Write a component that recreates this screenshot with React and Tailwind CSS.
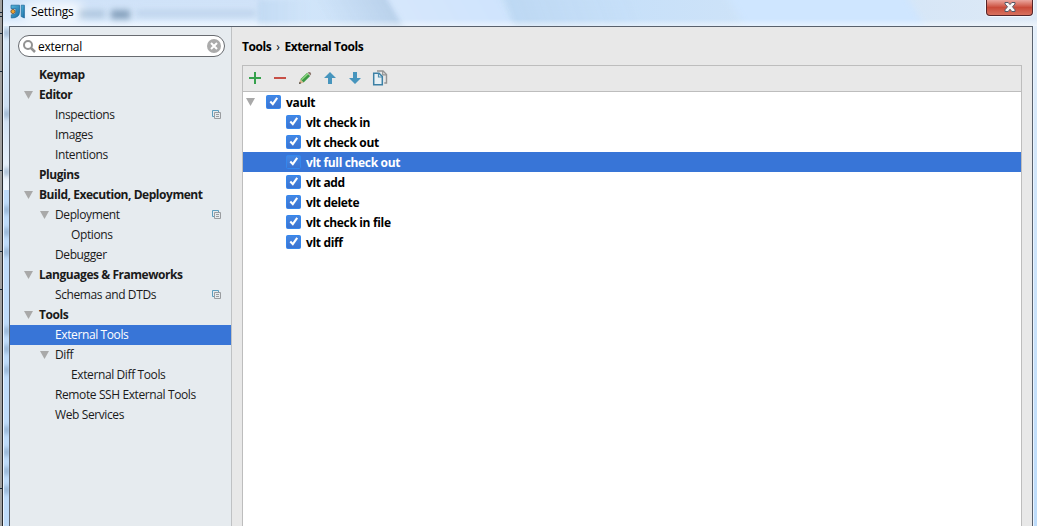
import React from "react";

const NAV = [
  { label: "Keymap", pad: "pl-[29px]", bold: true },
  { label: "Editor", pad: "pl-[14px]", bold: true, open: true },
  { label: "Inspections", pad: "pl-[45px]", project: true },
  { label: "Images", pad: "pl-[45px]" },
  { label: "Intentions", pad: "pl-[45px]" },
  { label: "Plugins", pad: "pl-[29px]", bold: true },
  { label: "Build, Execution, Deployment", pad: "pl-[14px]", bold: true, open: true },
  { label: "Deployment", pad: "pl-[30px]", open: true, project: true },
  { label: "Options", pad: "pl-[61px]" },
  { label: "Debugger", pad: "pl-[45px]" },
  { label: "Languages & Frameworks", pad: "pl-[14px]", bold: true, open: true },
  { label: "Schemas and DTDs", pad: "pl-[45px]", project: true },
  { label: "Tools", pad: "pl-[14px]", bold: true, open: true },
  { label: "External Tools", pad: "pl-[45px]", selected: true },
  { label: "Diff", pad: "pl-[30px]", open: true },
  { label: "External Diff Tools", pad: "pl-[61px]" },
  { label: "Remote SSH External Tools", pad: "pl-[45px]" },
  { label: "Web Services", pad: "pl-[45px]" },
];

const TOOLS = [
  "vlt check in",
  "vlt check out",
  "vlt full check out",
  "vlt add",
  "vlt delete",
  "vlt check in file",
  "vlt diff",
];

// Vertical centres of the blurred shapes seen through the left glass edge
const EDGE_SPOTS = [33, 114, 172, 210, 232, 252, 331, 349, 370, 430, 452, 471, 490];
const GUTTER_TICKS = [12, 16, 33, 71, 170, 251, 289, 488];

function Arrow() {
  return (
    <svg width="9" height="8" viewBox="0 0 9 8" className="shrink-0">
      <path d="M0 0H9L4.5 8Z" fill="#a9a9a9" />
    </svg>
  );
}

function ProjectIcon() {
  return (
    <svg width="10" height="10" viewBox="0 0 10 10" fill="none" className="ml-auto mr-[9px] shrink-0">
      <path d="M2 6.5H.5V.5H6.5V2" stroke="#5c9dbd" />
      <path d="M2.5 2.5H8.5V8.5H2.5ZM4 4.5H7M4 6.5H7" stroke="#9a9da0" />
    </svg>
  );
}

function NavRow({ item }) {
  return (
    <div
      className={`flex h-5 shrink-0 items-center ${item.pad} ${
        item.selected ? "bg-[#3875d7] text-white" : "text-[#1a1a1a]"
      } ${item.bold ? "font-bold tracking-[-0.46px]" : "tracking-[-0.39px]"}`}
    >
      {item.open && (
        <span className="mr-[5px] flex w-[10px]">
          <Arrow />
        </span>
      )}
      <span className="whitespace-nowrap">{item.label}</span>
      {item.project && <ProjectIcon />}
    </div>
  );
}

function Check() {
  return (
    <svg width="15" height="14" viewBox="0 0 15 14" className="shrink-0">
      <defs>
        <linearGradient id="box" x1="0" y1="0" x2="0" y2="1">
          <stop offset="0" stopColor="#4487e4" />
          <stop offset="1" stopColor="#3b73d0" />
        </linearGradient>
      </defs>
      <rect x=".5" y=".5" width="14" height="13" rx="1" fill="url(#box)" stroke="#3487ee" />
      <path d="M4.3 6.6L6.8 9.2L11.2 2.8" fill="none" stroke="#fff" strokeWidth="2.1" />
    </svg>
  );
}

function Logo() {
  return (
    <svg width="16" height="16" viewBox="0 0 16 16">
      <defs>
        <linearGradient id="logo" x1="0" y1="0" x2="1" y2="1">
          <stop offset="0" stopColor="#55b7dc" />
          <stop offset="1" stopColor="#1769a3" />
        </linearGradient>
      </defs>
      <path d="M1 1.2H9.5V8Q9.5 14 1.3 14V10.8Q5.8 10.8 5.8 8V4.5H1Z" fill="url(#logo)" stroke="#17649a" strokeWidth=".7" />
      <path d="M11.2 1.2H14.4V14L11.2 12.5Z" fill="url(#logo)" stroke="#17649a" strokeWidth=".7" />
      <circle cx="3" cy="7.5" r="2.1" fill="#f0a530" stroke="#674b2e" strokeWidth=".8" />
    </svg>
  );
}

function Toolbar() {
  return (
    <div className="flex h-[26px] items-start gap-[9px] border-b border-[#bdbdbd] bg-[#e8e8e8] pl-1 pt-1">
      <svg width="16" height="16" viewBox="0 0 16 16">
        <path d="M2 8H14M8 2V14" stroke="#36a14c" strokeWidth="2" />
      </svg>
      <svg width="16" height="16" viewBox="0 0 16 16">
        <path d="M2 8H14" stroke="#c74f46" strokeWidth="2" />
      </svg>
      <svg width="16" height="16" viewBox="0 0 16 16">
        <path d="M2 14L3.3 9.5L6.5 12.5Z" fill="#d9b58b" />
        <path d="M2 14L2.7 11.7L4.2 13.2Z" fill="#333" />
        <path d="M3.4 9.3L10 3L13.1 6L6.6 12.5Z" fill="#3b9743" />
        <path d="M4.5 9.8L11 3.6" stroke="#8dd781" strokeWidth="1.5" />
        <path d="M10.6 2.6Q12.3 1.3 13.6 2.5Q14.8 3.9 13.5 5.5Z" fill="#8b756b" />
      </svg>
      <svg width="16" height="16" viewBox="0 0 16 16">
        <path d="M8 2L14 8H10V14H6V8H2Z" fill="#4795bd" />
      </svg>
      <svg width="16" height="16" viewBox="0 0 16 16">
        <path d="M8 14L14 8H10V2H6V8H2Z" fill="#4795bd" />
      </svg>
      <svg width="16" height="16" viewBox="0 0 16 16" fill="none">
        <path d="M5 1H11L14.5 4.5V13H12.3" stroke="#949494" strokeWidth="1.4" />
        <path d="M10.7 1V4.8H14.3" stroke="#949494" strokeWidth="1.2" />
        <path d="M1.7 3.2H7L10.3 6.5V14.8H1.7Z" fill="#e8f0f4" stroke="#3c80a5" strokeWidth="1.5" />
        <path d="M6.5 3.5V7H10" stroke="#4d8eaf" strokeWidth="1.2" />
      </svg>
    </div>
  );
}

function TitleBar() {
  return (
    <header className="relative flex h-[26px] shrink-0 items-start overflow-hidden bg-linear-to-r from-[#d9e9fa] via-[#c7e0f9] via-60% to-[#dde9f6]">
      <div className="absolute left-0 top-0 h-full w-[262px] bg-linear-to-b from-[#cfe2f8] to-[#dcecfd]" />
      <div className="absolute left-[255px] top-0 h-full w-[50px] bg-linear-to-r from-[#c2daf3] to-transparent blur-[2px]" />
      <div className="absolute left-[320px] top-[-10px] h-[50px] w-[75px] skew-x-[30deg] bg-linear-to-r from-transparent to-[#b9d1eb] blur-[3px]" />
      <div className="absolute left-[395px] top-[-10px] h-[50px] w-[110px] skew-x-[30deg] bg-linear-to-r from-[#d6e7fc] to-[#cfe4fd] blur-[3px]" />
      <div className="absolute left-[508px] top-[-10px] h-[50px] w-[130px] skew-x-[20deg] bg-linear-to-r from-[#bdd8f3] to-transparent blur-[3px]" />
      <div className="absolute left-[735px] top-[-10px] h-[50px] w-[180px] skew-x-[30deg] bg-[#cfe6ff] blur-[4px]" />
      <div className="absolute inset-x-0 bottom-0 h-[7px] bg-linear-to-b from-transparent to-white/50" />
      <div className="absolute left-[20px] top-[2px] h-5 w-[60px] rounded-full bg-white/80 blur-[6px]" />
      <div className="absolute left-[76px] top-[10px] h-[8px] w-[26px] bg-[#88a6c4]/50 blur-[3px]" />
      <div className="absolute left-[108px] top-[10px] h-[9px] w-[19px] bg-[#6f8dab]/80 blur-[3px]" />
      <div className="absolute left-[133px] top-[10px] h-[7px] w-[120px] bg-[#a5c0dd]/50 blur-[3px]" />
      <div className="relative ml-[7px] mt-[4px]">
        <Logo />
      </div>
      <span className="relative ml-[5px] mt-[3px] leading-[18px] tracking-[-0.25px] text-black">Settings</span>
      <button
        aria-label="Close"
        className="relative ml-auto mr-[4px] flex h-[16px] w-[47px] items-start justify-center rounded-b-[4px] border border-t-0 border-[#54252a] bg-linear-to-b from-[#eaa69f] via-[#c94b3a] via-50% to-[#d8715e] pt-[2px] shadow-[0_0_0_1px_#ffffffaa]"
      >
        <svg width="12" height="10" viewBox="0 0 12 10">
          <path d="M1 .5H4.2L6 2.6L7.8 .5H11V2L8.5 4.8L11 7.8V9.5H7.8L6 7.2L4.2 9.5H1V7.8L3.5 4.8L1 2Z" fill="#f7f7f7" stroke="#555866" />
        </svg>
      </button>
    </header>
  );
}

function Sidebar() {
  return (
    <aside className="flex w-[222px] shrink-0 flex-col border-r border-[#bfc1c3] bg-[#e6ebef]">
      <div className="ml-2 mt-2 flex h-[22px] w-[207px] shrink-0 items-center rounded-full border border-[#686b70] bg-white pl-[4px] pr-[3px]">
        <svg width="13" height="13" viewBox="0 0 13 13" fill="none" stroke="#929292">
          <circle cx="5" cy="5" r="4" strokeWidth="2" />
          <path d="M8 8L12 12" strokeWidth="2.5" />
        </svg>
        <span className="ml-[2px] mt-px tracking-[-0.25px] text-black">external</span>
        <svg width="14" height="14" viewBox="0 0 14 14" className="ml-auto">
          <circle cx="7" cy="7" r="7" fill="#ababab" />
          <path d="M4 4L10 10M10 4L4 10" stroke="#fff" strokeWidth="2" />
        </svg>
      </div>
      <nav className="mt-[8px] flex flex-col">
        {NAV.map((item) => (
          <NavRow key={item.label} item={item} />
        ))}
      </nav>
    </aside>
  );
}

function ToolTree() {
  return (
    <div className="flex flex-1 flex-col bg-white font-bold tracking-[-0.34px] text-black">
      <div className="flex h-5 items-center pl-[3px]">
        <Arrow />
        <span className="ml-[11px] mr-[5px] flex">
          <Check />
        </span>
        <span className="pt-[2px]">vault</span>
      </div>
      {TOOLS.map((name) => (
        <div
          key={name}
          className={`flex h-5 items-center pl-[43px] ${
            name === "vlt full check out" ? "bg-[#3875d7] text-white" : ""
          }`}
        >
          <Check />
          <span className="ml-[5px] pt-[2px]">{name}</span>
        </div>
      ))}
    </div>
  );
}

export default function App() {
  return (
    <div className="flex h-[526px] w-[1037px] overflow-hidden font-['Open_Sans','Noto_Sans',sans-serif] text-[12px] leading-[20px]">
      <div className="relative w-[2px] shrink-0 bg-[#a0a0a0]">
        {GUTTER_TICKS.map((top) => (
          <i key={top} className="absolute left-0 h-px w-full bg-[#16283a]" style={{ top }} />
        ))}
      </div>
      <div className="w-px shrink-0 bg-[#25282c]" />
      <div className="flex min-w-0 flex-1 flex-col bg-[#e3effc]">
        <TitleBar />
        <div className="flex min-h-0 flex-1">
          <div className="w-px shrink-0 bg-[#eaf4ff]" />
          <div className="relative flex w-[5px] shrink-0 flex-col overflow-hidden">
            <div className="h-[164px] bg-linear-to-b from-[#dcecfb] via-[#cddff2] to-[#f0f6fd]" />
            <div className="flex-1 bg-[#bfdcfa]" />
            {EDGE_SPOTS.map((y) => (
              <i
                key={y}
                className="absolute left-0 h-[8px] w-full bg-[#7f9cbd]/70 blur-[2px]"
                style={{ top: y - 30 }}
              />
            ))}
          </div>
          <div className="flex min-w-0 flex-1 border-x border-t border-[#59616d]">
            <Sidebar />
            <main className="flex min-w-0 flex-1 flex-col bg-[#e8e8e8] pl-[10px] pr-[10px]">
              <h1 className="mt-[10px] flex h-5 shrink-0 items-center font-bold tracking-[-0.43px] text-black">
                <span>Tools</span>
                <span className="mx-[5px] font-normal">›</span>
                <span>External Tools</span>
              </h1>
              <section className="mt-[8px] flex flex-1 flex-col border-x border-t border-[#bdbdbd]">
                <Toolbar />
                <ToolTree />
              </section>
            </main>
          </div>
          <div className="w-px shrink-0 bg-[#eaf4ff]" />
          <div className="w-[3px] shrink-0 bg-linear-to-b from-[#e5effa] via-[#d6e8fa] via-20% to-[#bddcfb]" />
        </div>
      </div>
    </div>
  );
}
